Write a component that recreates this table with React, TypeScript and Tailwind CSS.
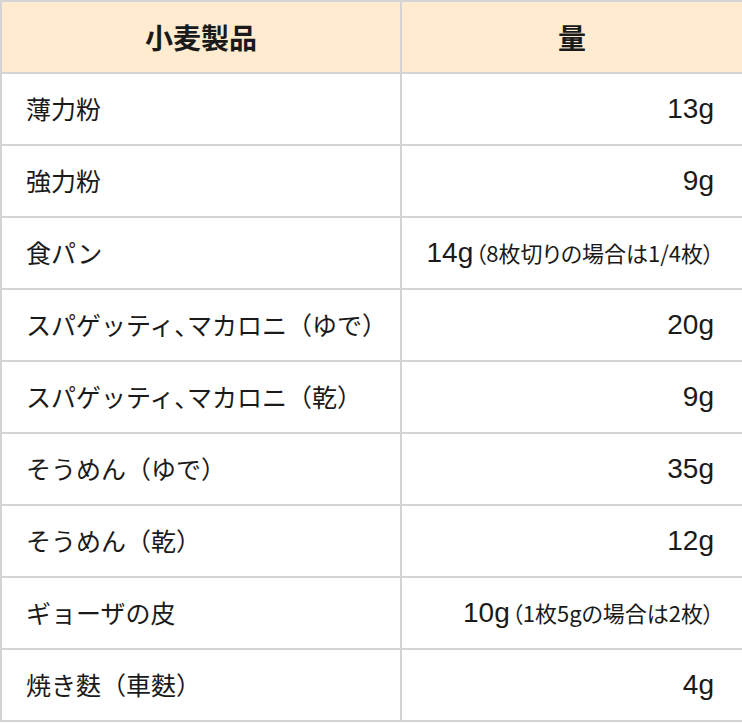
const rows: { name: string; amount: string; note?: string }[] = [
  { name: "薄力粉", amount: "13g" },
  { name: "強力粉", amount: "9g" },
  { name: "食パン", amount: "14g", note: "（8枚切りの場合は1/4枚）" },
  { name: "スパゲッティ、マカロニ（ゆで）", amount: "20g" },
  { name: "スパゲッティ、マカロニ（乾）", amount: "9g" },
  { name: "そうめん（ゆで）", amount: "35g" },
  { name: "そうめん（乾）", amount: "12g" },
  { name: "ギョーザの皮", amount: "10g", note: "（1枚5gの場合は2枚）" },
  { name: "焼き麩（車麩）", amount: "4g" },
];

// 読点だけ詰める
const renderName = (name: string) => {
  const parts = name.split("、");
  return parts.map((part, i) => (
    <span key={i}>
      {part}
      {i < parts.length - 1 && (
        <span className="[font-feature-settings:'palt']">、</span>
      )}
    </span>
  ));
};

const App = () => {
  return (
    <div className="w-[742px] bg-white font-['Noto_Sans_CJK_JP','Noto_Sans',sans-serif] text-[#1a1a1a]">
      <table className="w-[742px] table-fixed border-collapse border-2 border-[#d4d4d4]">
        <colgroup>
          <col className="w-[400px]" />
          <col className="w-[342px]" />
        </colgroup>
        <thead>
          <tr className="h-[72px] bg-[#ffebd0]">
            <th className="border-2 border-[#d4d4d4] text-center text-[28px] font-bold">
              小麦製品
            </th>
            <th className="border-2 border-[#d4d4d4] text-center text-[28px] font-bold">
              量
            </th>
          </tr>
        </thead>
        <tbody>
          {rows.map((row) => (
            <tr key={row.name} className="h-[72px]">
              <td className="border-2 border-[#d4d4d4] pl-[24px] text-left text-[25px] whitespace-nowrap">
                {renderName(row.name)}
              </td>
              <td className="border-2 border-[#d4d4d4] pr-[28px] text-right whitespace-nowrap font-['Liberation_Sans','Noto_Sans_CJK_JP',sans-serif] text-[28px]">
                {row.amount}
                {row.note && (
                  <span className="font-['Noto_Sans_CJK_JP',sans-serif] text-[22px] [font-feature-settings:'palt'] pl-[2px]">
                    {row.note}
                  </span>
                )}
              </td>
            </tr>
          ))}
        </tbody>
      </table>
    </div>
  );
};

export default App;
